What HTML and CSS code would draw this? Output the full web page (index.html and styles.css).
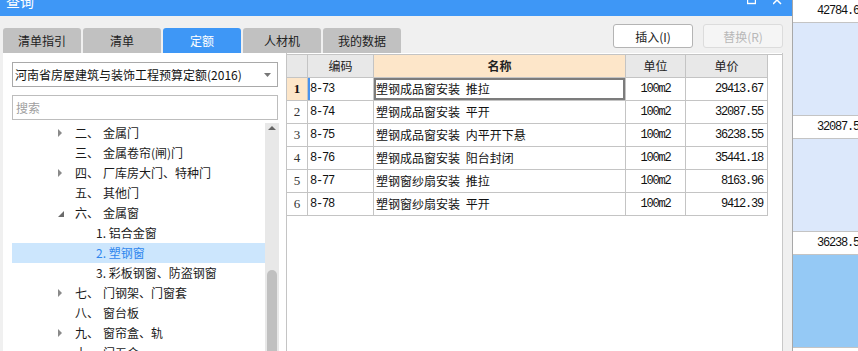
FILE: index.html
```html
<!DOCTYPE html>
<html lang="zh-CN">
<head>
  <meta charset="UTF-8" />
  <title>查询</title>
  <link rel="stylesheet" href="styles.css">
</head>
<body>

  <div class="dialog">
    <div class="titlebar">
      <span class="title">查询</span>
      <span class="win-btns">
        <svg width="9" height="9" viewBox="0 0 9 9"><rect x="0.5" y="-4" width="8" height="7.5" fill="none" stroke="#fff" stroke-width="1.4"/></svg>
        <svg width="9" height="9" viewBox="0 0 9 9"><path d="M0 -4 L8 4 M8 -4 L0 4" stroke="#fff" stroke-width="1.5"/></svg>
      </span>
    </div>

    <div class="toolbar">
      <div class="tabs">
        <div class="tab">清单指引</div>
        <div class="tab">清单</div>
        <div class="tab active">定额</div>
        <div class="tab">人材机</div>
        <div class="tab">我的数据</div>
      </div>
      <div class="actions">
        <button class="btn">插入(I)</button>
        <button class="btn" disabled>替换(R)</button>
      </div>
    </div>

    <div class="main">
      <div class="lib">
        <div class="combo">
          <span>河南省房屋建筑与装饰工程预算定额(2016)</span>
          <svg width="7" height="4" viewBox="0 0 7 4"><path d="M0 0 H7 L3.5 4 Z" fill="#777"/></svg>
        </div>
        <div class="search">搜索</div>

        <div class="tree-wrap">
          <ul class="tree">
            <li class="node closed"><i></i><b>二、</b>金属门</li>
            <li class="node"><i></i><b>三、</b>金属卷帘(闸)门</li>
            <li class="node closed"><i></i><b>四、</b>厂库房大门、特种门</li>
            <li class="node"><i></i><b>五、</b>其他门</li>
            <li class="node open"><i></i><b>六、</b>金属窗</li>
            <li class="leaf">1. 铝合金窗</li>
            <li class="leaf selected">2. 塑钢窗</li>
            <li class="leaf">3. 彩板钢窗、防盗钢窗</li>
            <li class="node closed"><i></i><b>七、</b>门钢架、门窗套</li>
            <li class="node"><i></i><b>八、</b>窗台板</li>
            <li class="node closed"><i></i><b>九、</b>窗帘盒、轨</li>
            <li class="node"><i></i><b>十、</b>门五金</li>
          </ul>
          <div class="vscroll">
            <svg width="14" height="10" viewBox="0 0 14 10"><path d="M3 7 L7 3 L11 7 Z" fill="#666"/></svg>
            <div class="thumb"></div>
          </div>
        </div>
      </div>

      <div class="grid-area">
        <div class="grid">
          <div class="grid-row head">
            <div class="c num"></div>
            <div class="c">编码</div>
            <div class="c sel-col">名称</div>
            <div class="c">单位</div>
            <div class="c">单价</div>
          </div>
          <div class="grid-row current">
            <div class="c num">1</div>
            <div class="c code">8-73</div>
            <div class="c name">塑钢成品窗安装 推拉</div>
            <div class="c unit">100m2</div>
            <div class="c price">29413.67</div>
          </div>
          <div class="grid-row">
            <div class="c num">2</div>
            <div class="c code">8-74</div>
            <div class="c name">塑钢成品窗安装 平开</div>
            <div class="c unit">100m2</div>
            <div class="c price">32087.55</div>
          </div>
          <div class="grid-row">
            <div class="c num">3</div>
            <div class="c code">8-75</div>
            <div class="c name">塑钢成品窗安装 内平开下悬</div>
            <div class="c unit">100m2</div>
            <div class="c price">36238.55</div>
          </div>
          <div class="grid-row">
            <div class="c num">4</div>
            <div class="c code">8-76</div>
            <div class="c name">塑钢成品窗安装 阳台封闭</div>
            <div class="c unit">100m2</div>
            <div class="c price">35441.18</div>
          </div>
          <div class="grid-row">
            <div class="c num">5</div>
            <div class="c code">8-77</div>
            <div class="c name">塑钢窗纱扇安装 推拉</div>
            <div class="c unit">100m2</div>
            <div class="c price">8163.96</div>
          </div>
          <div class="grid-row">
            <div class="c num">6</div>
            <div class="c code">8-78</div>
            <div class="c name">塑钢窗纱扇安装 平开</div>
            <div class="c unit">100m2</div>
            <div class="c price">9412.39</div>
          </div>
        </div>
      </div>
    </div>
  </div>

  <!-- window behind the dialog -->
  <div class="side">
    <div class="s-row">42784.67</div>
    <div class="s-fill"></div>
    <div class="s-row">32087.55</div>
    <div class="s-fill"></div>
    <div class="s-row">36238.55</div>
    <div class="s-fill dark"></div>
    <div class="s-row"></div>
  </div>

</body>
</html>
```

FILE: styles.css
```css
html, body {
  margin: 0;
  padding: 0;
}

body {
  width: 858px;
  height: 351px;
  overflow: hidden;
  display: flex;
  font-family: "Noto Sans CJK SC", "Noto Sans", sans-serif;
  font-size: 12px;
  color: #1e1e1e;
  background: #fff;
}

/* dialog */
.dialog {
  width: 792px;
  height: 351px;
  flex-shrink: 0;
  background: #f0f0f0;
  display: flex;
  flex-direction: column;
}

.titlebar {
  height: 16px;
  flex-shrink: 0;
  background: #3e97f6;
  color: #fff;
  display: flex;
  align-items: flex-start;
  overflow: hidden;
}

.title {
  font-size: 14px;
  line-height: 16px;
  margin: -7px 0 0 6px;
}

.win-btns {
  margin-left: auto;
  margin-right: 10px;
  display: flex;
  gap: 17px;
}

.win-btns svg {
  display: block;
}

/* tabs + buttons */
.toolbar {
  height: 37px;
  flex-shrink: 0;
  display: flex;
  padding-left: 3px;
  padding-right: 9px;
}

.tabs {
  display: flex;
  gap: 2px;
  align-self: flex-end;
}

.tab {
  width: 78px;
  height: 25px;
  line-height: 25px;
  text-align: center;
  background: #c1c1c1;
  color: #222;
  border-radius: 3px 3px 0 0;
}

.tab.active {
  background: #3e97f6;
  color: #fff;
}

.actions {
  margin-left: auto;
  margin-top: 8px;
  display: flex;
  gap: 10px;
}

.btn {
  width: 80px;
  height: 24px;
  padding: 0;
  font-family: inherit;
  font-size: 12px;
  color: #222;
  background: #fff;
  border: 1px solid #b4b4b4;
  border-radius: 3px;
}

.btn:disabled {
  color: #b8b8b8;
  background: #f5f5f5;
  border-color: #dcdcdc;
}

/* main split */
.main {
  flex: 1;
  display: flex;
  margin-left: 3px;
  width: 780px;
  min-height: 0;
}

.lib {
  width: 283px;
  flex-shrink: 0;
  background: #fff;
  padding: 9px 0 0 9px;
  box-sizing: border-box;
  display: flex;
  flex-direction: column;
}

.combo {
  width: 266px;
  height: 25px;
  box-sizing: border-box;
  border: 1px solid #a9a9a9;
  display: flex;
  align-items: center;
  padding: 0 6px 0 2px;
  color: #111;
}

.combo svg {
  margin-left: auto;
}

.search {
  width: 266px;
  height: 25px;
  box-sizing: border-box;
  margin-top: 8px;
  border: 1px solid #bdbdbd;
  line-height: 23px;
  padding-left: 3px;
  color: #a0a0a0;
}

.tree-wrap {
  flex: 1;
  display: flex;
  margin-top: 3px;
  min-height: 0;
}

.tree {
  list-style: none;
  margin: 0;
  padding: 0;
  width: 253px;
}

.tree li {
  height: 20px;
  line-height: 20px;
  white-space: nowrap;
  display: flex;
  color: #1a1a1a;
}

.node {
  padding-left: 46px;
}

.node i {
  width: 17px;
  flex-shrink: 0;
  position: relative;
}

.node.closed i::before {
  content: "";
  position: absolute;
  left: 0;
  top: 6px;
  border-left: 4px solid #8a8a8a;
  border-top: 4px solid transparent;
  border-bottom: 4px solid transparent;
}

.node.open i::before {
  content: "";
  position: absolute;
  left: 0;
  top: 8px;
  border-right: 6px solid #6a6a6a;
  border-top: 6px solid transparent;
}

.node b {
  font-weight: normal;
  width: 28px;
  flex-shrink: 0;
}

.leaf {
  padding-left: 84px;
}

.leaf.selected {
  background: #cce6fd;
  color: #2f86ee;
}

.vscroll {
  width: 14px;
  background: #e8e8e8;
  position: relative;
}

.vscroll svg {
  display: block;
}

.thumb {
  position: absolute;
  left: 2px;
  right: 2px;
  top: 147px;
  bottom: -20px;
  background: #c0c0c0;
  border-radius: 5px;
}

/* grid */
.grid-area {
  flex: 1;
  background: #fff;
  border-left: 1px solid #c4c4c4;
  border-right: 1px solid #c8c8c8;
}

.grid {
  margin-top: 1px;
  border-top: 1px solid #c4c4c4;
}

.grid-row {
  display: grid;
  grid-template-columns: 21px 66px 252px 60px 82px;
  height: 23px;
}

.c {
  box-sizing: border-box;
  border-right: 1px solid #c4c4c4;
  border-bottom: 1px solid #c4c4c4;
  line-height: 22px;
  white-space: nowrap;
  overflow: hidden;
}

.head .c {
  background: #e8e8e8;
  text-align: center;
  color: #222;
}

.head .sel-col {
  background: #fde6c9;
  font-weight: bold;
}

.num {
  font-family: "Liberation Serif", serif;
  font-size: 13px;
  text-align: center;
  color: #333;
}

.current .num {
  background: #fde6c9;
  font-weight: bold;
  color: #111;
}

.code, .unit, .price {
  font-family: "Liberation Mono", monospace;
  font-size: 12px;
  letter-spacing: -1.2px;
  color: #111;
}

.code {
  padding-left: 2px;
}

.current .code {
  box-shadow: inset 2px 0 0 #4a93ee;
}

.name {
  padding-left: 2px;
  word-spacing: 3px;
  color: #111;
}

.current .name {
  box-shadow: inset 0 0 0 2px #7c7c7c;
}

.unit {
  text-align: center;
}

.price {
  text-align: right;
  padding-right: 4px;
}

/* window behind */
.side {
  flex: 1;
  border-left: 1px solid #a8a8a8;
  display: flex;
  flex-direction: column;
  min-width: 0;
}

.s-row {
  height: 23px;
  flex-shrink: 0;
  box-sizing: border-box;
  border-bottom: 1px solid #c4c4c4;
  background: #fff;
  padding-left: 24px;
  line-height: 22px;
  white-space: nowrap;
  font-family: "Liberation Mono", monospace;
  font-size: 12px;
  letter-spacing: -1.2px;
  color: #111;
}

.s-fill {
  height: 93px;
  flex-shrink: 0;
  box-sizing: border-box;
  border-bottom: 1px solid #c4c4c4;
  background: #dce8fb;
}

.s-fill.dark {
  background: #95c9f5;
}
```
